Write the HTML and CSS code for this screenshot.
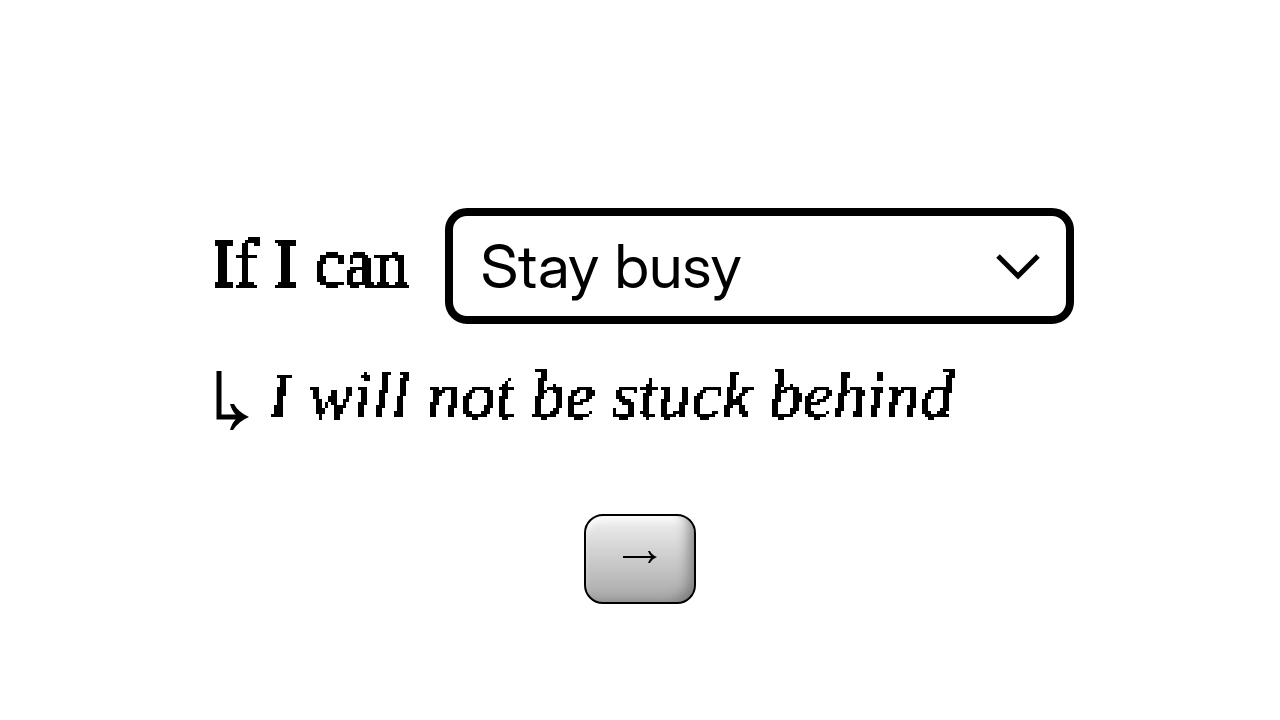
FILE: index.html
```html
<!DOCTYPE html>
<html lang="en">
<head>
<meta charset="utf-8">
<title>If I can</title>
<link rel="stylesheet" href="styles.css">
</head>
<body>
<svg class="defs" width="0" height="0" aria-hidden="true">
  <filter id="pixels" x="0" y="0" width="100%" height="100%" color-interpolation-filters="sRGB">
    <feFlood x="1" y="1" width="1" height="1" flood-color="#000"/>
    <feComposite x="0" y="0" width="3" height="3"/>
    <feTile result="grid"/>
    <feComposite in="SourceGraphic" in2="grid" operator="in"/>
    <feComponentTransfer><feFuncA type="discrete" tableValues="0 1"/></feComponentTransfer>
    <feMorphology operator="dilate" radius="1"/>
  </filter>
</svg>
<main class="page">
  <form class="prompt">
    <div class="line">
      <label class="lead" for="choice">If I can</label>
      <div class="picker">
        <select class="choice" id="choice"><option>Stay busy</option></select>
        <svg class="chevron" viewBox="0 0 44 26" aria-hidden="true"><path d="M2 2 22 22 42 2"/></svg>
      </div>
    </div>
    <p class="result">
      <svg class="turn" viewBox="0 0 36 60" aria-hidden="true"><path class="stem" d="M7 1V47H28"/><path class="head" d="M18 34H22Q26 42 37 47Q27 51 21 60H18Q20 53 24 49V45Q20 41 18 34Z"/></svg>
      <em class="outcome">I will not be stuck behind</em>
    </p>
    <button class="next" type="button" aria-label="Next">
      <svg class="arrow" viewBox="0 0 36 16" aria-hidden="true"><path class="shaft" d="M1 8H31"/><path class="tip" d="M26 2H28Q30 6 35 8Q30 10 28 14H26Q27 11 29 9V7Q27 5 26 2Z"/></svg>
    </button>
  </form>
</main>
</body>
</html>
```
FILE: styles.css
```css
body {
  margin: 0;
  background: #fff;
  color: #000;
  font-family: "Liberation Serif", serif;
}

.defs {
  position: absolute;
}

.page {
  min-height: 100vh;
  display: grid;
  justify-content: center;
  align-content: center;
}

.prompt {
  display: flex;
  flex-direction: column;
  padding-top: 92px;
}

.line {
  display: flex;
  align-items: center;
  gap: 36px;
  padding-left: 6px;
}

.lead,
.outcome {
  padding-bottom: 6px;
  font-size: 68px;
  line-height: 70px;
  -webkit-text-stroke: 1px #000;
  filter: url(#pixels);
}

.lead {
  -webkit-text-stroke-width: 2px;
}

.picker {
  display: grid;
  align-items: center;
}

.choice,
.chevron {
  grid-area: 1 / 1;
}

.choice {
  appearance: none;
  width: 629px;
  height: 116px;
  padding: 0 28px;
  border: 8px solid #000;
  border-radius: 22px;
  background: #fff;
  color: #000;
  font: 440 61px "Inter Display", Inter, sans-serif;
  font-variation-settings: "opsz" 32;
}

.chevron {
  justify-self: end;
  width: 44px;
  height: 26px;
  margin: 2px 34px 0 0;
  fill: none;
  stroke: #000;
  stroke-width: 5;
  pointer-events: none;
}

.result {
  display: flex;
  align-items: center;
  gap: 20px;
  margin: 36px 0 78px;
  padding-left: 6px;
}

.turn {
  width: 36px;
  height: 60px;
  margin-top: 4px;
  overflow: visible;
}

.stem,
.shaft {
  fill: none;
  stroke: #000;
}

.stem {
  stroke-width: 5;
}

.shaft {
  stroke-width: 2;
}

.next {
  align-self: center;
  display: grid;
  place-items: center;
  width: 112px;
  height: 90px;
  padding: 0 0 4px;
  border: 2px solid #000;
  border-radius: 19px;
  background: linear-gradient(#f0f0f0, #a8a8a8);
  box-shadow: inset -12px -6px 14px -8px #777, inset 0 8px 8px -4px #fff;
}

.arrow {
  width: 36px;
  height: 16px;
}
```
